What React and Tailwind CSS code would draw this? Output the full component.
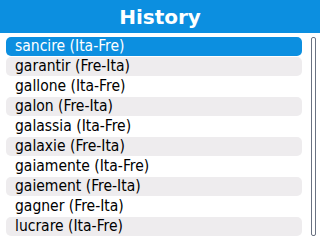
const items = [
  "sancire (Ita-Fre)",
  "garantir (Fre-Ita)",
  "gallone (Ita-Fre)",
  "galon (Fre-Ita)",
  "galassia (Ita-Fre)",
  "galaxie (Fre-Ita)",
  "gaiamente (Ita-Fre)",
  "gaiement (Fre-Ita)",
  "gagner (Fre-Ita)",
  "lucrare (Ita-Fre)",
];

export default function App() {
  return (
    <div className="w-[320px] h-[240px] bg-white overflow-hidden" style={{ fontFamily: "'DejaVu Sans', sans-serif" }}>
      <div className="h-[33px] bg-[#0c8fe0] flex items-center justify-center text-white font-bold text-[20px]">
        History
      </div>
      <div className="flex pt-[4px] pl-[6px] pr-[4px]">
        <ul className="flex-1 flex flex-col gap-px font-['DejaVu_Sans_Condensed',sans-serif]">
          {items.map((item, i) => (
            <li
              key={item}
              className={
                i === 0
                  ? "h-[19px] leading-[19px] rounded-[5px] pl-[9px] text-[15.5px] bg-[#0c8fe0] text-white"
                  : i % 2 === 1
                  ? "h-[19px] leading-[19px] rounded-[5px] pl-[9px] text-[15.5px] bg-[#eeecee] text-black"
                  : "h-[19px] leading-[19px] rounded-[5px] pl-[9px] text-[15.5px] bg-white text-black"
              }
            >
              {item}
            </li>
          ))}
        </ul>
        <div className="ml-[9px] w-[5px] h-[199px] border border-gray-500 rounded-[2px]"></div>
      </div>
    </div>
  );
}
